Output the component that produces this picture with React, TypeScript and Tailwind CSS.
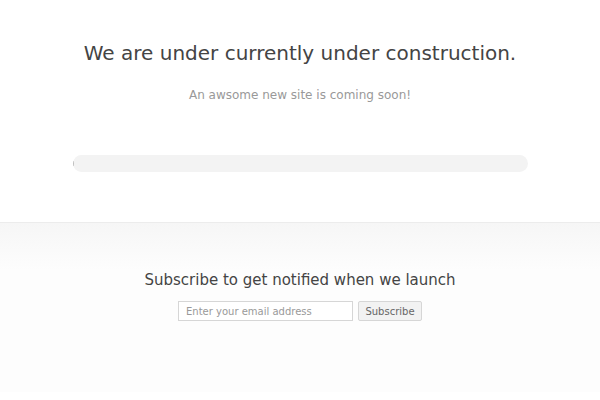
import React from "react";

export default function App() {
  return (
    <div className="w-[600px] h-[400px] overflow-hidden bg-white font-['DejaVu_Sans',sans-serif]">
      <div className="flex flex-col items-center pt-[39px] h-[222px]">
        <h1 className="text-[20px] leading-[28px] text-[#444]">
          We are under currently under construction.
        </h1>
        <p className="mt-[19px] text-[12px] leading-[18px] text-[#999]">
          An awsome new site is coming soon!
        </p>
        <div className="mt-[51px] w-[455px] h-[17px] rounded-full bg-[#f3f3f3] relative overflow-hidden">
          <div className="absolute left-0 top-[6px] w-[1px] h-[5px] bg-[#bbb]" />
        </div>
      </div>
      <div className="border-t border-[#ececec] bg-gradient-to-b from-[#f6f6f6] to-[#fdfdfd] to-[28%] h-[170px] flex flex-col items-center pt-[46px]">
        <h2 className="text-[15px] leading-[22px] text-[#444]">
          Subscribe to get notified when we launch
        </h2>
        <div className="mt-[10px] flex gap-[5px]">
          <input
            className="w-[175px] h-[20px] border border-[#d6d6d6] bg-white px-[7px] text-[10px] text-[#555] placeholder:text-[#999] outline-none"
            placeholder="Enter your email address"
          />
          <button className="w-[64px] h-[20px] border border-[#d6d6d6] bg-[#f2f2f2] text-[10px] text-[#666] rounded-[2px]">
            Subscribe
          </button>
        </div>
      </div>
    </div>
  );
}
